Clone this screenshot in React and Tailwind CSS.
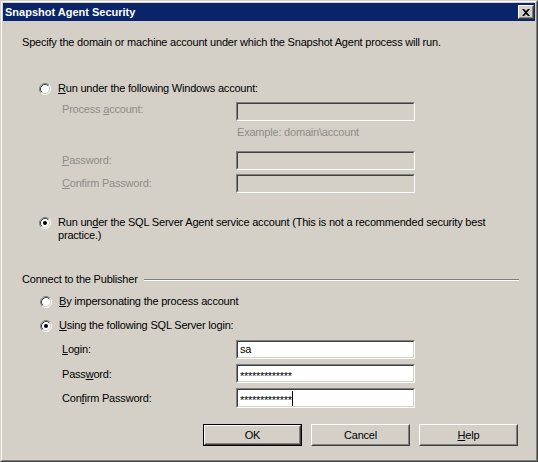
import { useState } from 'react';

const GRAY = 'text-[#8e8c87]';

function Radio({ checked }) {
  return (
    <svg width="12" height="12" viewBox="0 0 12 12" className="shrink-0">
      <circle cx="6" cy="6" r="4.5" fill="#ffffff" />
      <path d="M 2.11 9.89 A 5.5 5.5 0 0 1 9.89 2.11" stroke="#808080" fill="none" />
      <path d="M 9.89 2.11 A 5.5 5.5 0 0 1 2.11 9.89" stroke="#ffffff" fill="none" />
      <path d="M 2.82 9.18 A 4.5 4.5 0 0 1 9.18 2.82" stroke="#404040" fill="none" />
      <path d="M 9.18 2.82 A 4.5 4.5 0 0 1 2.82 9.18" stroke="#d4d0c8" fill="none" />
      {checked && <circle cx="6" cy="6" r="2" fill="#000000" />}
    </svg>
  );
}

function TextBox({ disabled, children, className = '' }) {
  return (
    <div className={`w-[179px] border border-t-[#808080] border-l-[#808080] border-b-white border-r-white ${className}`}>
      <div
        className={`h-full border border-t-[#404040] border-l-[#404040] border-b-[#d4d0c8] border-r-[#d4d0c8] flex items-center pl-px ${
          disabled ? 'bg-[#d4d0c8]' : 'bg-white'
        }`}
      >
        {children}
      </div>
    </div>
  );
}

function Button({ isDefault, children }) {
  const inner = (
    <div className="h-full border border-t-white border-l-white border-b-[#404040] border-r-[#404040]">
      <div className="h-full border border-t-[#d4d0c8] border-l-[#d4d0c8] border-b-[#808080] border-r-[#808080] flex items-center justify-center">
        {children}
      </div>
    </div>
  );
  return (
    <div className={`w-[99px] h-[22px] ${isDefault ? 'border border-black' : ''}`}>{inner}</div>
  );
}

function FieldRow({ label, disabled, children, mt, h = 'h-[19px]', labelPad = 'pt-[3px]' }) {
  return (
    <div className={`flex ${mt}`}>
      <div className={`w-[174px] ml-[59px] ${labelPad} leading-[13px] ${disabled ? GRAY : ''}`}>{label}</div>
      <TextBox disabled={disabled} className={h}>
        {children}
      </TextBox>
    </div>
  );
}

export default function App() {
  const [runAs] = useState('agent');
  const [connect] = useState('sql');
  const mask = '*************';

  return (
    <div className="w-[538px] h-[462px] font-['Liberation_Sans',Arial,sans-serif] text-[11px] tracking-[-0.2px] text-black select-none">
      <div className="h-full border border-t-[#d4d0c8] border-l-[#d4d0c8] border-b-[#404040] border-r-[#404040]">
        <div className="h-full border border-t-white border-l-white border-b-[#808080] border-r-[#808080] bg-[#d4d0c8] p-px flex flex-col">
          {/* Title bar */}
          <div className="h-[18px] bg-[#0a246a] flex items-center justify-between pl-[2px] pr-[1px]">
            <span className="text-white font-bold text-[11px] tracking-normal">Snapshot Agent Security</span>
            <div className="w-[16px] h-[14px] border border-t-white border-l-white border-b-[#404040] border-r-[#404040]">
              <div className="h-full border border-t-[#d4d0c8] border-l-[#d4d0c8] border-b-[#808080] border-r-[#808080] bg-[#d4d0c8] flex items-center justify-center">
                <svg width="8" height="7" viewBox="0 0 8 7">
                  <path d="M0 0h2l2 2 2-2h2L5 3.5 8 7H6L4 5 2 7H0l3-3.5z" fill="#000" />
                </svg>
              </div>
            </div>
          </div>

          {/* Body */}
          <div className="flex flex-col">
            <div className="ml-[19px] mt-[15px] leading-[13px]">
              Specify the domain or machine account under which the Snapshot Agent process will run.
            </div>

            <div className="flex items-center gap-[7px] ml-[36px] mt-[33px] h-[13px]">
              <Radio checked={runAs === 'windows'} />
              <span>
                <span className="underline">R</span>un under the following Windows account:
              </span>
            </div>

            <FieldRow
              mt="mt-[7px]"
              disabled
              labelPad="pt-[1px]"
              label={
                <>
                  Process <span className="underline">a</span>ccount:
                </>
              }
            />

            <div className={`ml-[234px] mt-[5px] h-[13px] leading-[13px] ${GRAY}`}>Example: domain\account</div>

            <FieldRow
              mt="mt-[12px]"
              disabled
              label={
                <>
                  <span className="underline">P</span>assword:
                </>
              }
            />
            <FieldRow
              mt="mt-[4px]"
              disabled
              label={
                <>
                  <span className="underline">C</span>onfirm Password:
                </>
              }
            />

            <div className="flex items-start gap-[7px] ml-[36px] mt-[23px]">
              <div className="h-[13px] flex items-center">
                <Radio checked={runAs === 'agent'} />
              </div>
              <span className="leading-[13px] whitespace-nowrap">
                Run un<span className="underline">d</span>er the SQL Server Agent service account (This is not a recommended security best
                <br />
                practice.)
              </span>
            </div>

            {/* Connect group */}
            <div className="flex items-center gap-[6px] ml-[19px] w-[497px] mt-[31px] h-[13px]">
              <span className="whitespace-nowrap">Connect to the Publisher</span>
              <div className="flex-1 h-0 border-t border-t-[#808080] border-b border-b-white" />
            </div>

            <div className="flex items-center gap-[7px] ml-[37px] mt-[9px] h-[13px]">
              <Radio checked={connect === 'process'} />
              <span>
                <span className="underline">B</span>y impersonating the process account
              </span>
            </div>

            <div className="flex items-center gap-[7px] ml-[37px] mt-[11px] h-[13px]">
              <Radio checked={connect === 'sql'} />
              <span>
                <span className="underline">U</span>sing the following SQL Server login:
              </span>
            </div>

            <FieldRow
              mt="mt-[8px]"
              labelPad="pt-[3px]"
              label={
                <>
                  <span className="underline">L</span>ogin:
                </>
              }
            >
              <span className="pl-[1px]">sa</span>
            </FieldRow>
            <FieldRow
              mt="mt-[5px]"
              labelPad="pt-[4px]"
              label={
                <>
                  Pass<span className="underline">w</span>ord:
                </>
              }
            >
              <span className="pl-[1px] self-start pt-[2px] text-[11px] tracking-[-0.3px]">{mask}</span>
            </FieldRow>
            <FieldRow
              mt="mt-[5px]"
              h="h-[20px]"
              labelPad="pt-[4px]"
              label={
                <>
                  Con<span className="underline">f</span>irm Password:
                </>
              }
            >
              <span className="pl-[1px] self-start pt-[2px] text-[11px] tracking-[-0.3px]">{mask}</span>
              <span className="w-px h-[15px] bg-black" />
            </FieldRow>

            {/* Buttons */}
            <div className="flex gap-[9px] ml-[200px] mt-[16px]">
              <Button isDefault>OK</Button>
              <Button>Cancel</Button>
              <Button>
                <span>
                  <span className="underline">H</span>elp
                </span>
              </Button>
            </div>
          </div>
        </div>
      </div>
    </div>
  );
}
